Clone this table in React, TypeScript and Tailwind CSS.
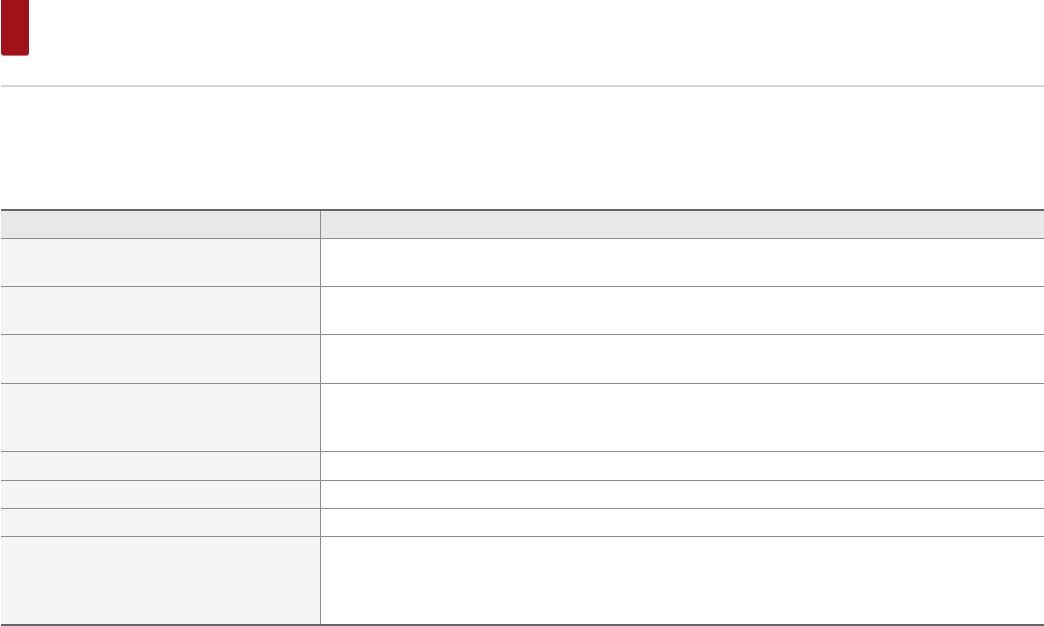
// content heights of the body rows (border excluded)
const rows = [47, 47, 48, 67, 28, 27, 27, 87];

export default function App() {
  return (
    <div className="w-[1044px] h-[626px] bg-white pl-[1px] font-['Liberation_Sans',sans-serif] overflow-hidden">
      <div className="w-[28px] h-[55px] bg-[#a0111a] rounded-b-[3px] shadow-[0_1px_0_#c97278]" />
      <div className="mt-[30px] h-[2px] bg-[#d6d6d6]" />
      <div className="mt-[122px] border-t-2 border-b-2 border-[#666666]">
        <div className="flex h-[28px] bg-[#e8e8e8] border-b border-[#8c8c8c]">
          <div className="w-[320px] border-r border-[#8c8c8c]" />
          <div className="flex-1" />
        </div>
        {rows.map((h, i) => {
          const last = i === rows.length - 1;
          return (
            <div
              key={i}
              className={last ? "flex" : "flex border-b border-[#8c8c8c]"}
              style={{ height: last ? h : h + 1 }}
            >
              <div className="w-[320px] bg-[#f4f4f4] border-r border-[#8c8c8c]" />
              <div className="flex-1 bg-white" />
            </div>
          );
        })}
      </div>
    </div>
  );
}
